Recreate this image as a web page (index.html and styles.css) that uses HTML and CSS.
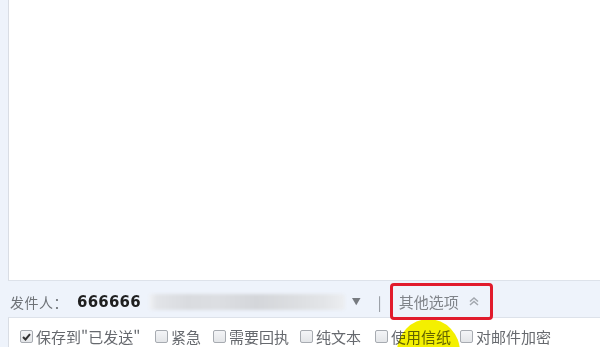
FILE: index.html
```html
<!DOCTYPE html>
<html lang="zh-CN">
<head>
<meta charset="utf-8">
<title>写信</title>
<link rel="stylesheet" href="styles.css">
</head>
<body>
<div class="compose">
  <div class="editor"></div>
  <div class="sender">
    <span class="sender-label">发件人：</span>
    <span class="sender-name">666666</span>
    <span class="sender-addr"></span>
    <span class="sender-arrow">▼</span>
    <span class="sep">|</span>
    <span class="more">
      <span class="more-text">其他选项</span>
      <svg class="chev" width="10" height="9" viewBox="0 0 10 9"><path d="M1 4.5 L5 1 L9 4.5 M1 8 L5 4.5 L9 8" fill="none" stroke="#a2a7ae" stroke-width="1.5"/></svg>
    </span>
  </div>
  <div class="options">
    <label class="opt"><span class="cb checked"><svg width="9" height="8" viewBox="0 0 9 8"><path d="M1 4 L3.5 6.5 L8 1.2" fill="none" stroke="#333" stroke-width="2"/></svg></span><span class="lbl w1">保存到"已发送"</span></label>
    <label class="opt"><span class="cb"></span><span class="lbl w2">紧急</span></label>
    <label class="opt"><span class="cb"></span><span class="lbl w3">需要回执</span></label>
    <label class="opt"><span class="cb"></span><span class="lbl w4">纯文本</span></label>
    <label class="opt"><span class="cb"></span><span class="lbl w5 hl">使用信纸</span></label>
    <label class="opt"><span class="cb"></span><span class="lbl">对邮件加密</span></label>
  </div>
</div>
</body>
</html>
```
FILE: styles.css
```css
html, body {
  margin: 0;
  padding: 0;
  overflow: hidden;
}
body {
  background: #eef3fb;
  width: 600px;
  height: 347px;
  font-family: "Noto Sans CJK SC", "Noto Sans", sans-serif;
}
.compose {
  margin-left: 8px;
  height: 347px;
  overflow: hidden;
}
.editor {
  height: 280px;
  background: #fff;
  border-left: 1px solid #d9dde4;
  border-bottom: 1px solid #dde2ea;
}
.sender {
  box-sizing: border-box;
  height: 36px;
  display: flex;
  align-items: center;
  padding-left: 2px;
  padding-top: 5px;
  font-size: 14px;
  color: #6f7378;
}
.sender-label {
  letter-spacing: 0.5px;
  width: 67px;
}
.sender-name {
  font-family: "DejaVu Sans", sans-serif;
  font-weight: bold;
  font-size: 15px;
  color: #1f1f1f;
  letter-spacing: 0.2px;
}
.sender-addr {
  margin-left: 8px;
  width: 196px;
  height: 16px;
  border-radius: 3px;
  background: linear-gradient(90deg, #f0f2f5 0%, #e2e4e8 4%, #d9dbdf 20%, #dcdee2 35%, #d4d6da 55%, #dcdee1 75%, #e3e5e8 90%, #eceef1 100%);
  filter: blur(1.5px);
}
.sender-arrow {
  margin-left: 7px;
  font-size: 9px;
  color: #777b80;
}
.sep {
  margin-left: 17px;
  color: #8c9096;
  font-size: 14px;
}
.more {
  position: relative;
  margin-left: 17px;
  display: flex;
  align-items: center;
  color: #80848a;
  font-size: 15px;
}
.more::after {
  content: "";
  position: absolute;
  left: -9px;
  top: -8px;
  width: 97px;
  height: 31px;
  border: 3px solid #e11b2c;
  border-radius: 4px;
  z-index: 2;
}
.chev {
  margin-left: 10px;
}
.options {
  box-sizing: border-box;
  height: 31px;
  background: #fff;
  border-left: 1px solid #d9dde4;
  border-top: 1px solid #dde2ea;
  display: flex;
  align-items: center;
  padding-left: 11px;
  padding-top: 7px;
  font-size: 15px;
  color: #66696e;
}
.opt {
  display: flex;
  align-items: center;
  margin-right: 8px;
}
.cb {
  width: 11px;
  height: 11px;
  border: 1px solid #a7abb1;
  border-radius: 2px;
  background: linear-gradient(#f4f5f7, #e3e5e8);
  margin-right: 3px;
  display: flex;
  align-items: center;
  justify-content: center;
}
.lbl {
  display: inline-block;
  line-height: 20px;
}
.w1 { width: 111px; }
.w2 { width: 34px; }
.w3 { width: 63px; }
.w4 { width: 51px; }
.w5 { width: 61px; }
.hl {
  position: relative;
}
.hl::before {
  content: "";
  position: absolute;
  left: 6px;
  top: -8px;
  width: 63px;
  height: 66px;
  border-radius: 50%;
  background: #f4f000;
  mix-blend-mode: multiply;
}
```
